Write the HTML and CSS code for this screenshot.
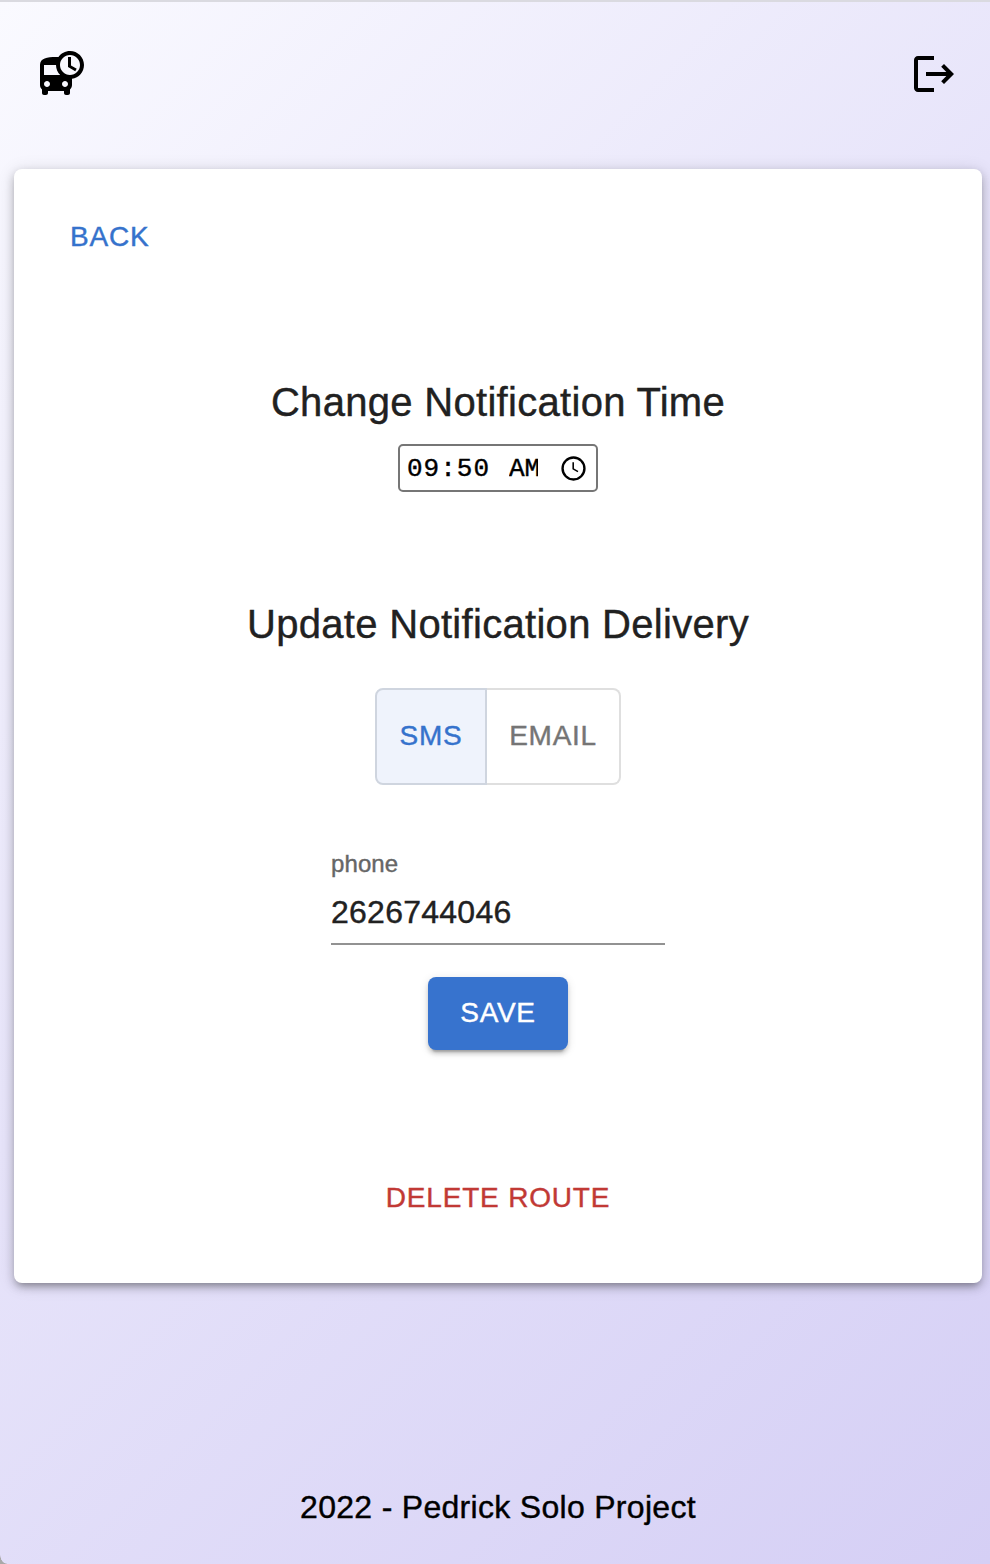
FILE: index.html
```html
<!DOCTYPE html>
<html lang="en">
<head>
<meta charset="utf-8">
<title>Route notifications</title>
<link rel="stylesheet" href="styles.css">
</head>
<body>
<header class="header">
  <svg class="bus-icon" viewBox="0 0 24 24"><path d="M16 1c-2.4 0-4.52 1.21-5.78 3.05.01-.01.01-.02.02-.03C9.84 4 9.42 4 9 4c-4.42 0-8 .5-8 4v10c0 .88.39 1.67 1 2.22V22c0 .55.45 1 1 1h1c.55 0 1-.45 1-1v-1h8v1c0 .55.45 1 1 1h1c.55 0 1-.45 1-1v-1.78c.61-.55 1-1.34 1-2.22v-3.08c3.39-.49 6-3.39 6-6.92 0-3.87-3.13-7-7-7zM4.5 19c-.83 0-1.5-.67-1.5-1.5S3.67 16 4.5 16s1.5.67 1.5 1.5S5.33 19 4.5 19zM3 13V8h6c0 1.96.81 3.73 2.11 5H3zm10.500 6c-.83 0-1.500-.67-1.500-1.500s.67-1.500 1.500-1.500 1.500.67 1.500 1.500-.67 1.500-1.500 1.500zm2.500-6c-2.760 0-5-2.240-5-5s2.240-5 5-5 5 2.240 5 5-2.240 5-5 5zm.5-9H15v5l3.620 2.160.75-1.230-2.870-1.680V4z"/></svg>
  <svg class="logout-icon" viewBox="0 0 24 24"><path d="m17 7-1.410 1.410L18.170 11H8v2h10.170l-2.580 2.580L17 17l5-5zM4 5h8V3H4c-1.100 0-2 .9-2 2v14c0 1.100.9 2 2 2h8v-2H4V5z"/></svg>
</header>
<main class="card">
  <button class="text-button back">BACK</button>
  <h1 class="heading time-heading">Change Notification Time</h1>
  <div class="time-field"><span class="time-value"><span>09:50</span><span class="meridiem">AM</span></span>
    <svg class="clock-icon" viewBox="0 0 24 24"><circle cx="12" cy="12" r="10.500"/><path d="M11.700 6v6.300l4.600 2.700"/></svg>
  </div>
  <h2 class="heading delivery-heading">Update Notification Delivery</h2>
  <div class="toggle"><button class="option selected">SMS</button><button class="option email">EMAIL</button></div>
  <div class="phone-field"><label class="phone-label">phone</label><div class="phone-value">2626744046</div></div>
  <button class="save">SAVE</button>
  <button class="text-button delete">DELETE ROUTE</button>
</main>
<footer class="footer">2022 - Pedrick Solo Project</footer>
<span class="window-corner"></span>
</body>
</html>
```
FILE: styles.css
```css
* { box-sizing: border-box; }
html { background: #d5cff5; }
body { position: relative; margin: 0; height: 1564px; overflow: hidden; display: flex; flex-direction: column; font-family: "Liberation Sans", Arial, sans-serif; background: linear-gradient(135deg, #fafaff 0%, #e7e4fa 45%, #d5cff5 100%); border-top: 2px solid #dadae0; -webkit-text-stroke: .4px currentColor; }
button { font: inherit; border: 0; background: none; padding: 0; -webkit-text-stroke: .4px currentColor; }
.header { height: 167px; padding: 47px 32px 0 38px; display: flex; justify-content: space-between; }
.bus-icon { width: 48px; height: 48px; }
.logout-icon { width: 48px; height: 48px; margin-top: 1px; }
.card { width: 968px; height: 1114px; flex: none; margin-left: 14px; background: #fff; border-radius: 8px; display: flex; flex-direction: column; align-items: center; box-shadow: 0 6px 6px -4px rgba(0,0,0,.2), 0 4px 10px rgba(0,0,0,.22), 0 2px 18px rgba(0,0,0,.12); }
.text-button { font-size: 28px; line-height: 48px; letter-spacing: .8px; white-space: nowrap; }
.back { color: #3572cc; align-self: flex-start; margin: 44px 0 0 56px; }
.heading { margin: 0; font-size: 40px; line-height: 64px; font-weight: 400; letter-spacing: .3px; color: #212121; white-space: nowrap; }
.time-heading { margin-top: 109px; }
.time-field { width: 200px; height: 48px; margin-top: 10px; border: 2px solid #767676; border-radius: 5px; display: flex; align-items: center; justify-content: space-between; padding: 0 10px 0 7px; }
.time-value { display: flex; gap: 19px; width: 131px; padding-top: 2px; overflow: hidden; font-family: "Liberation Mono", monospace; font-size: 26px; letter-spacing: 1px; white-space: nowrap; color: #000; }
.meridiem { width: 29px; overflow: hidden; flex: none; letter-spacing: 0; }
.clock-icon { width: 25px; height: 25px; fill: none; stroke: #000; stroke-width: 2.3; }
.clock-icon path { stroke-width: 1.5; }
.delivery-heading { margin-top: 100px; }
.toggle { width: 246px; height: 97px; margin-top: 32px; display: flex; }
.option { flex: 1; color: #757575; font-size: 28px; letter-spacing: .7px; padding-bottom: 1px; }
.selected { flex: none; width: 112px; background: #eff3fc; color: #3572cc; border: 2px solid #cfd5df; border-radius: 8px 0 0 8px; }
.email { border: 2px solid #dfdfdf; border-left: 0; border-radius: 0 8px 8px 0; }
.phone-field { width: 334px; margin-top: 62px; border-bottom: 2px solid #929292; height: 98px; }
.phone-label { display: block; font-size: 24px; line-height: 34px; letter-spacing: .1px; color: #666; }
.phone-value { margin-top: 8px; font-size: 32px; line-height: 46px; letter-spacing: .25px; color: #212121; }
.save { width: 140px; height: 73px; margin-top: 32px; padding-bottom: 1px; background: #3773ce; color: #fff; border-radius: 8px; font-size: 28px; letter-spacing: .7px; box-shadow: 0 6px 2px -4px rgba(0,0,0,.2), 0 4px 4px rgba(0,0,0,.14), 0 2px 10px rgba(0,0,0,.12); }
.delete { color: #c13935; margin-top: 124px; }
.footer { margin-top: 199px; padding-left: 6px; text-align: center; color: #000; font-size: 32px; line-height: 50px; letter-spacing: .3px; }
.window-corner { position: absolute; left: 0; bottom: 0; width: 7px; height: 9px; background: radial-gradient(ellipse 7px 9px at 100% 0, transparent 92%, #a9a9a9 100%); }
```
